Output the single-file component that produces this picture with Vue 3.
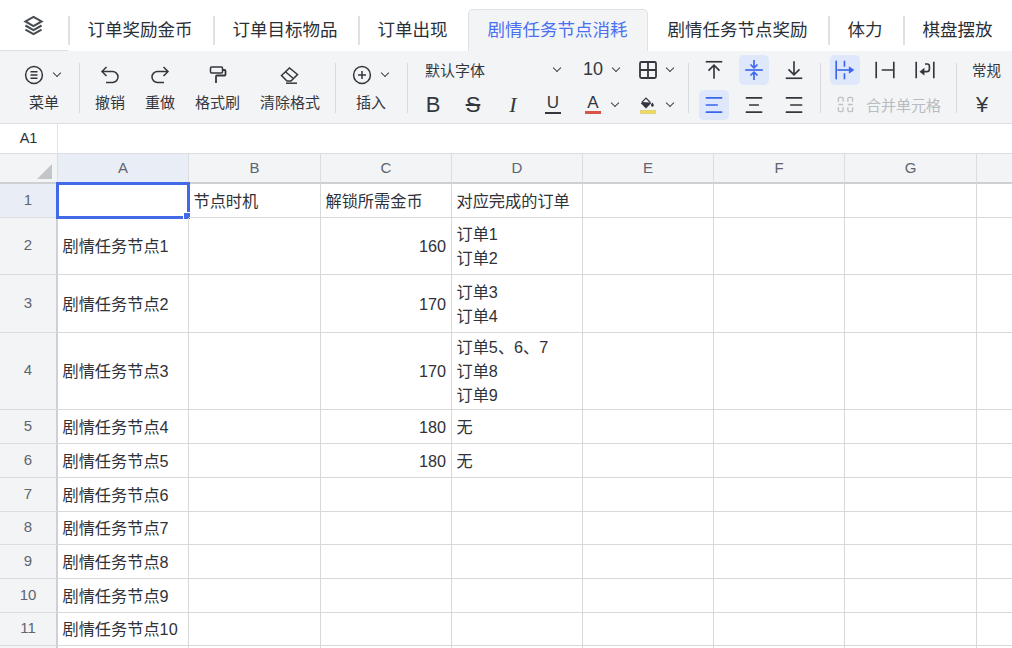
<script setup>
const tabs = ['订单奖励金币', '订单目标物品', '订单出现', '剧情任务节点消耗', '剧情任务节点奖励', '体力', '棋盘摆放']
const activeTab = 3
const colWidths = [131, 132, 131, 131, 131, 131, 132, 36]
const cols = ['A', 'B', 'C', 'D', 'E', 'F', 'G', '']
const rows = [
  { h: 34, a: '', b: '节点时机', c: '解锁所需金币', cl: true, d: ['对应完成的订单'] },
  { h: 57, a: '剧情任务节点1', c: '160', d: ['订单1', '订单2'] },
  { h: 58, a: '剧情任务节点2', c: '170', d: ['订单3', '订单4'] },
  { h: 77, a: '剧情任务节点3', c: '170', d: ['订单5、6、7', '订单8', '订单9'] },
  { h: 34, a: '剧情任务节点4', c: '180', d: ['无'] },
  { h: 34, a: '剧情任务节点5', c: '180', d: ['无'] },
  { h: 34, a: '剧情任务节点6' },
  { h: 33, a: '剧情任务节点7' },
  { h: 34, a: '剧情任务节点8' },
  { h: 34, a: '剧情任务节点9' },
  { h: 33, a: '剧情任务节点10' },
  { h: 3, a: '' }
]
const gridCols = '58px ' + colWidths.map((w) => w + 'px').join(' ')
const gridRows = '30px ' + rows.map((r) => r.h + 'px').join(' ')
const icons = {
  layers: '<path d="M10 2.500l7 4-7 4-7-4z"/><path d="M3 10l7 4 7-4"/><path d="M3 13.500l7 4 7-4"/>',
  menu: '<circle cx="10" cy="10" r="8.400"/><path d="M6.500 6.800h7M6.500 10h7M6.500 13.200h7"/>',
  undo: '<path d="M6.500 2L2 6.500 6.500 11"/><path d="M2 6.500h10.500a5.500 5.500 0 0 1 0 11H6"/>',
  redo: '<path d="M13.500 2L18 6.500 13.500 11"/><path d="M18 6.500H7.500a5.500 5.500 0 0 0 0 11H14"/>',
  brush: '<rect x="2.500" y="2" width="12" height="6" rx="1"/><path d="M14.500 5h2a1 1 0 0 1 1 1v3.500a1 1 0 0 1-1 1H9a1 1 0 0 0-1 1V18" stroke-width="1.800"/>',
  eraser: '<path d="M1.500 10.500L9.500 3l8 6.500-6.500 6.500H7z"/><path d="M5.500 6.800l7.500 6.500"/><path d="M6 18.200h11"/>',
  plus: '<circle cx="10" cy="10" r="8.400"/><path d="M6 10h8M10 6v8"/>',
  table: '<rect x="2" y="2" width="16" height="16" rx="1.500" stroke-width="1.800"/><path d="M10 2v16M2 10h16" stroke-width="1.800"/>',
  fill: '<path d="M7.500 2.500L1 9l6.500 6.500L14 9z" fill="currentColor" stroke="none"/><path d="M2.500 7.500L7.500 2.500 13 8" fill="#f3f4f6" stroke="currentColor" stroke-width="1.500"/><path d="M15.500 8c1 1.500 1.800 2.500 1.800 3.400a1.800 1.800 0 0 1-3.600 0c0-.9.800-1.900 1.800-3.400z" fill="currentColor" stroke="none"/>',
  alignTop: '<path d="M2.500 2.500h15"/><path d="M10 18V5.500M5 10.500l5-5 5 5"/>',
  alignMid: '<path d="M2 10h16"/><path d="M10 1v6.500M6.800 5l3.200 3 3.200-3M10 19v-6.500M6.800 15l3.200-3 3.200 3"/>',
  alignBot: '<path d="M2.500 17.500h15"/><path d="M10 2v12.500M5 9.500l5 5 5-5"/>',
  left: '<path d="M2.500 3.500h15M2.500 10h11M2.500 16.500h15"/>',
  center: '<path d="M2.500 3.500h15M5.500 10h9M2.500 16.500h15"/>',
  right: '<path d="M2.500 3.500h15M6.500 10h11M2.500 16.500h15"/>',
  overflow: '<path d="M2 1.500v17"/><path d="M9.500 1.500V7M9.500 13v5.500"/><path d="M3 10h11"/><path d="M13.500 6.500L18.500 10l-5 3.500z" fill="currentColor" stroke="none"/>',
  clip: '<path d="M2 2.500v15M18 2.500v15M7 10h11"/>',
  wrap: '<path d="M2 2.500v15M18 2.500v15"/><path d="M10 4.500h2a2 2 0 0 1 2 2V9a2.500 2.500 0 0 1-2.500 2.500H8"/><path d="M9.500 8L5 11.500 9.500 15z" fill="currentColor" stroke="none"/>',
  merge: '<path d="M7.500 7V4a1.500 1.500 0 0 0-1.500-1.500H4A1.500 1.500 0 0 0 2.500 4v3M7.500 13v3A1.500 1.500 0 0 1 6 17.500H4A1.500 1.500 0 0 1 2.500 16v-3M12.500 7V4A1.500 1.500 0 0 1 14 2.500h2A1.500 1.500 0 0 1 17.500 4v3M12.500 13v3a1.500 1.500 0 0 0 1.500 1.500h2a1.500 1.500 0 0 0 1.500-1.500v-3"/><path d="M2.500 10h5M12.500 10h5"/>'
}
</script>

<template>
  <div class="app">
    <div class="tabs">
      <div class="home">
        <svg class="ic layers" viewBox="0 0 20 20" v-html="icons.layers"></svg>
      </div>
      <div
        v-for="(t, i) in tabs"
        :key="t"
        class="tab"
        :class="{ active: i === activeTab, plain: i !== activeTab && i !== activeTab + 1 }"
      >{{ t }}</div>
    </div>

    <div class="toolbar">
      <div class="group menu-group">
        <div class="big with-chev">
          <div class="big-icon">
            <svg class="ic" viewBox="0 0 20 20" v-html="icons.menu"></svg>
            <span class="chev"></span>
          </div>
          <span class="label">菜单</span>
        </div>
      </div>
      <div class="group edit-group">
        <div class="big"><div class="big-icon"><svg class="ic" viewBox="0 0 20 20" v-html="icons.undo"></svg></div><span class="label">撤销</span></div>
        <div class="big"><div class="big-icon"><svg class="ic" viewBox="0 0 20 20" v-html="icons.redo"></svg></div><span class="label">重做</span></div>
        <div class="big"><div class="big-icon"><svg class="ic" viewBox="0 0 20 20" v-html="icons.brush"></svg></div><span class="label">格式刷</span></div>
        <div class="big"><div class="big-icon"><svg class="ic" viewBox="0 0 20 20" v-html="icons.eraser"></svg></div><span class="label">清除格式</span></div>
      </div>
      <div class="group insert-group">
        <div class="big with-chev">
          <div class="big-icon">
            <svg class="ic" viewBox="0 0 20 20" v-html="icons.plus"></svg>
            <span class="chev"></span>
          </div>
          <span class="label insert-label">插入</span>
        </div>
      </div>
      <div class="group font-group">
        <div class="row">
          <span class="font-name">默认字体</span>
          <span class="chev"></span>
          <span class="size">10</span>
          <span class="chev"></span>
          <svg class="ic table" viewBox="0 0 20 20" v-html="icons.table"></svg>
          <span class="chev"></span>
        </div>
        <div class="row">
          <span class="glyph bold">B</span>
          <span class="glyph strike">S</span>
          <span class="glyph italic">I</span>
          <span class="glyph under"><b>U</b></span>
          <span class="color-a">A</span>
          <span class="chev"></span>
          <span class="fill-wrap">
            <svg class="ic fill" viewBox="0 0 20 16" v-html="icons.fill"></svg>
            <i class="fill-bar"></i>
          </span>
          <span class="chev"></span>
        </div>
      </div>
      <div class="group align-group">
        <div class="row">
          <span class="btn"><svg class="ic" viewBox="0 0 20 20" v-html="icons.alignTop"></svg></span>
          <span class="btn on"><svg class="ic" viewBox="0 0 20 20" v-html="icons.alignMid"></svg></span>
          <span class="btn"><svg class="ic" viewBox="0 0 20 20" v-html="icons.alignBot"></svg></span>
        </div>
        <div class="row">
          <span class="btn on"><svg class="ic" viewBox="0 0 20 20" v-html="icons.left"></svg></span>
          <span class="btn"><svg class="ic" viewBox="0 0 20 20" v-html="icons.center"></svg></span>
          <span class="btn"><svg class="ic" viewBox="0 0 20 20" v-html="icons.right"></svg></span>
        </div>
      </div>
      <div class="group wrap-group">
        <div class="row">
          <span class="btn on"><svg class="ic" viewBox="0 0 20 20" v-html="icons.overflow"></svg></span>
          <span class="btn"><svg class="ic" viewBox="0 0 20 20" v-html="icons.clip"></svg></span>
          <span class="btn"><svg class="ic" viewBox="0 0 20 20" v-html="icons.wrap"></svg></span>
        </div>
        <div class="row merge">
          <span class="btn"><svg class="ic" viewBox="0 0 20 20" v-html="icons.merge"></svg></span>
          <span class="merge-text">合并单元格</span>
        </div>
      </div>
      <div class="group num-group">
        <div class="row"><span class="num-label">常规</span></div>
        <div class="row"><span class="yen">¥</span></div>
      </div>
    </div>

    <div class="formula">
      <div class="cellname">A1</div>
    </div>

    <div class="sheet" :style="{ gridTemplateColumns: gridCols, gridTemplateRows: gridRows }">
      <div class="corner"><span class="tri"></span></div>
      <div v-for="(c, i) in cols" :key="'h' + i" class="colhead" :class="{ sel: i === 0 }">{{ c }}</div>
      <template v-for="(r, ri) in rows" :key="ri">
        <div class="rowhead" :class="{ sel: ri === 0 }">{{ ri < 11 ? ri + 1 : '' }}</div>
        <div class="cell">{{ r.a }}<span v-if="ri === 0" class="selection"><i class="handle"></i></span></div>
        <div class="cell">{{ r.b }}</div>
        <div class="cell" :class="{ num: !r.cl }">{{ r.c }}</div>
        <div class="cell multi"><span v-for="l in r.d" :key="l">{{ l }}</span></div>
        <div class="cell"></div>
        <div class="cell"></div>
        <div class="cell"></div>
        <div class="cell last"></div>
      </template>
    </div>
  </div>
</template>

<style>
html, body { margin: 0; background: #fff; overflow: hidden; }
</style>

<style scoped>
.app {
  width: 1012px;
  height: 648px;
  overflow: hidden;
  font-family: "Liberation Sans", "Noto Sans CJK SC", sans-serif;
  color: #2b2f36;
  background: #fff;
}
.ic {
  width: 20px;
  height: 20px;
  fill: none;
  stroke: currentColor;
  stroke-width: 1.5;
  flex: none;
  display: block;
}
.tabs {
  display: flex;
  height: 51px;
  width: 1100px;
  align-items: flex-end;
}
.home {
  width: 67.5px;
  height: 51px;
  box-sizing: border-box;
  border-bottom: 1px solid #dcdee1;
  display: flex;
  align-items: center;
  justify-content: center;
  color: #474b52;
}
.layers { width: 23px; height: 23px; stroke-width: 1.8; }
.tab {
  position: relative;
  height: 42px;
  box-sizing: border-box;
  padding: 0 20px;
  font-size: 17.5px;
  line-height: 42px;
  white-space: nowrap;
  color: #2b2f36;
}
.tab.plain::before {
  content: "";
  position: absolute;
  left: 0;
  top: 7px;
  height: 29px;
  width: 2px;
  background: #dfe0e3;
}
.tab.active {
  background: #f3f4f6;
  color: #4a6ff0;
  border: 1px solid #dfe1e5;
  border-bottom: 0;
  border-radius: 5px 5px 0 0;
  padding: 0 19px;
  line-height: 41px;
}
.toolbar {
  display: flex;
  height: 72px;
  background: #f3f4f6;
  border-bottom: 1px solid #dddee1;
  position: relative;
  color: #33373d;
}
.group {
  position: relative;
  flex: none;
  box-sizing: border-box;
}
.group::after {
  content: "";
  position: absolute;
  right: 0;
  top: 12px;
  height: 50px;
  width: 1px;
  background: #d9dadd;
}
.menu-group { width: 80px; padding-left: 24px; display: flex; }
.edit-group { width: 256px; padding-left: 15px; display: flex; gap: 20px; }
.insert-group { width: 72px; padding-left: 16px; display: flex; }
.font-group { width: 281px; padding-left: 17px; }
.align-group { width: 132px; padding-left: 10px; }
.wrap-group { width: 136px; padding-left: 9px; }
.num-group { width: 56px; padding-left: 15px; }
.num-group::after { display: none; }
.big {
  display: flex;
  flex-direction: column;
  align-items: center;
}
.big-icon {
  height: 48px;
  display: flex;
  align-items: center;
  gap: 10px;
}
.label {
  font-size: 15px;
  line-height: 16px;
  white-space: nowrap;
  margin-top: -4px;
}
.with-chev .label {
  align-self: flex-start;
  margin-left: 5px;
}
.with-chev .insert-label { margin-left: 4px; }
.chev {
  width: 6px;
  height: 6px;
  box-sizing: border-box;
  border-right: 1.5px solid #33373d;
  border-bottom: 1.5px solid #33373d;
  transform: rotate(45deg) translate(-1.5px, -1.5px);
  flex: none;
  display: block;
}
.row {
  display: flex;
  align-items: center;
  height: 35px;
  margin-top: 1px;
}
.row + .row { margin-top: 0; }
.btn {
  width: 30px;
  height: 30px;
  margin-right: 10px;
  border-radius: 5px;
  display: flex;
  align-items: center;
  justify-content: center;
  flex: none;
}
.btn .ic { width: 22px; height: 22px; }
.btn.on {
  background: #dfe7fb;
  color: #3a66ee;
}
.font-name { font-size: 15px; width: 129px; white-space: nowrap; }
.size { font-size: 18px; margin-left: 23px; width: 30px; }
.table { margin-left: 19px; margin-right: 9px; }
.glyph {
  width: 40px;
  text-align: center;
  font-size: 22px;
  line-height: 30px;
  flex: none;
}
.bold { margin-left: -12px; }
.strike { text-decoration: line-through; text-decoration-thickness: 1.5px; }
.italic { font-style: italic; font-family: "Liberation Serif", serif; }
.under { display: flex; justify-content: center; }
.under b {
  display: block;
  width: 16px;
  height: 16px;
  font-weight: 400;
  font-size: 17px;
  line-height: 14px;
  text-align: center;
  border-bottom: 2px solid #33373d;
}
.color-a {
  width: 16px;
  margin-left: 12px;
  margin-right: 11px;
  font-size: 17px;
  line-height: 16px;
  text-align: center;
  border-bottom: 3px solid #d9534a;
  flex: none;
}
.fill-wrap {
  margin-left: 22px;
  margin-right: 11px;
  width: 16px;
  flex: none;
  display: block;
}
.fill { width: 16px; height: 13px; }
.fill-bar {
  display: block;
  height: 4px;
  margin-top: 1px;
  background: #f0dc5a;
  box-shadow: inset 0 0 0 0.5px #c9c9a0;
}
.merge .btn { color: #bfc1c5; margin-right: 6px; }
.merge .btn .ic { width: 19px; height: 19px; }
.merge-text { color: #b9bbbf; font-size: 15px; white-space: nowrap; }
.num-label { font-size: 14.5px; white-space: nowrap; }
.yen { font-size: 22px; margin-left: 4px; }
.formula {
  height: 29px;
  border-bottom: 1px solid #dddee1;
  display: flex;
}
.cellname {
  width: 58px;
  box-sizing: border-box;
  border-right: 1px solid #e2e3e6;
  text-align: center;
  font-size: 14.5px;
  line-height: 29px;
}
.sheet {
  display: grid;
  position: relative;
}
.corner,
.colhead {
  background: #f3f4f6;
  border-right: 1px solid #dcdde0;
  border-bottom: 2px solid #cfd0d3;
  box-sizing: border-box;
}
.corner { position: relative; }
.tri {
  position: absolute;
  left: 37px;
  top: 10px;
  width: 0;
  height: 0;
  border-left: 15px solid transparent;
  border-bottom: 15px solid #c3c6c9;
}
.colhead {
  text-align: center;
  font-size: 15px;
  line-height: 28px;
  color: #60656e;
}
.colhead.sel { background: #e9edf6; }
.rowhead {
  background: #f3f4f6;
  border-right: 2px solid #cfd0d3;
  border-bottom: 1px solid #dcdde0;
  box-sizing: border-box;
  padding-bottom: 3px;
  display: flex;
  align-items: center;
  justify-content: center;
  font-size: 15px;
  color: #60656e;
}
.rowhead.sel { background: #e9edf6; }
.cell {
  position: relative;
  box-sizing: border-box;
  border-right: 1px solid #d9d9d9;
  border-bottom: 1px solid #d9d9d9;
  padding: 0 5px 0 4.5px;
  display: flex;
  align-items: center;
  font-size: 16.2px;
  line-height: 24px;
  color: #2f3238;
  white-space: nowrap;
}
.cell.num { justify-content: flex-end; }
.cell.multi {
  flex-direction: column;
  align-items: flex-start;
  justify-content: center;
}
.cell.last { border-right: 0; }
.selection {
  position: absolute;
  left: -2px;
  top: -2px;
  width: 134px;
  height: 37px;
  box-sizing: border-box;
  border: 3px solid #4169e8;
}
.handle {
  position: absolute;
  right: -4px;
  bottom: -4px;
  width: 6px;
  height: 6px;
  background: #4169e8;
  border: 1px solid #fff;
}
</style>
